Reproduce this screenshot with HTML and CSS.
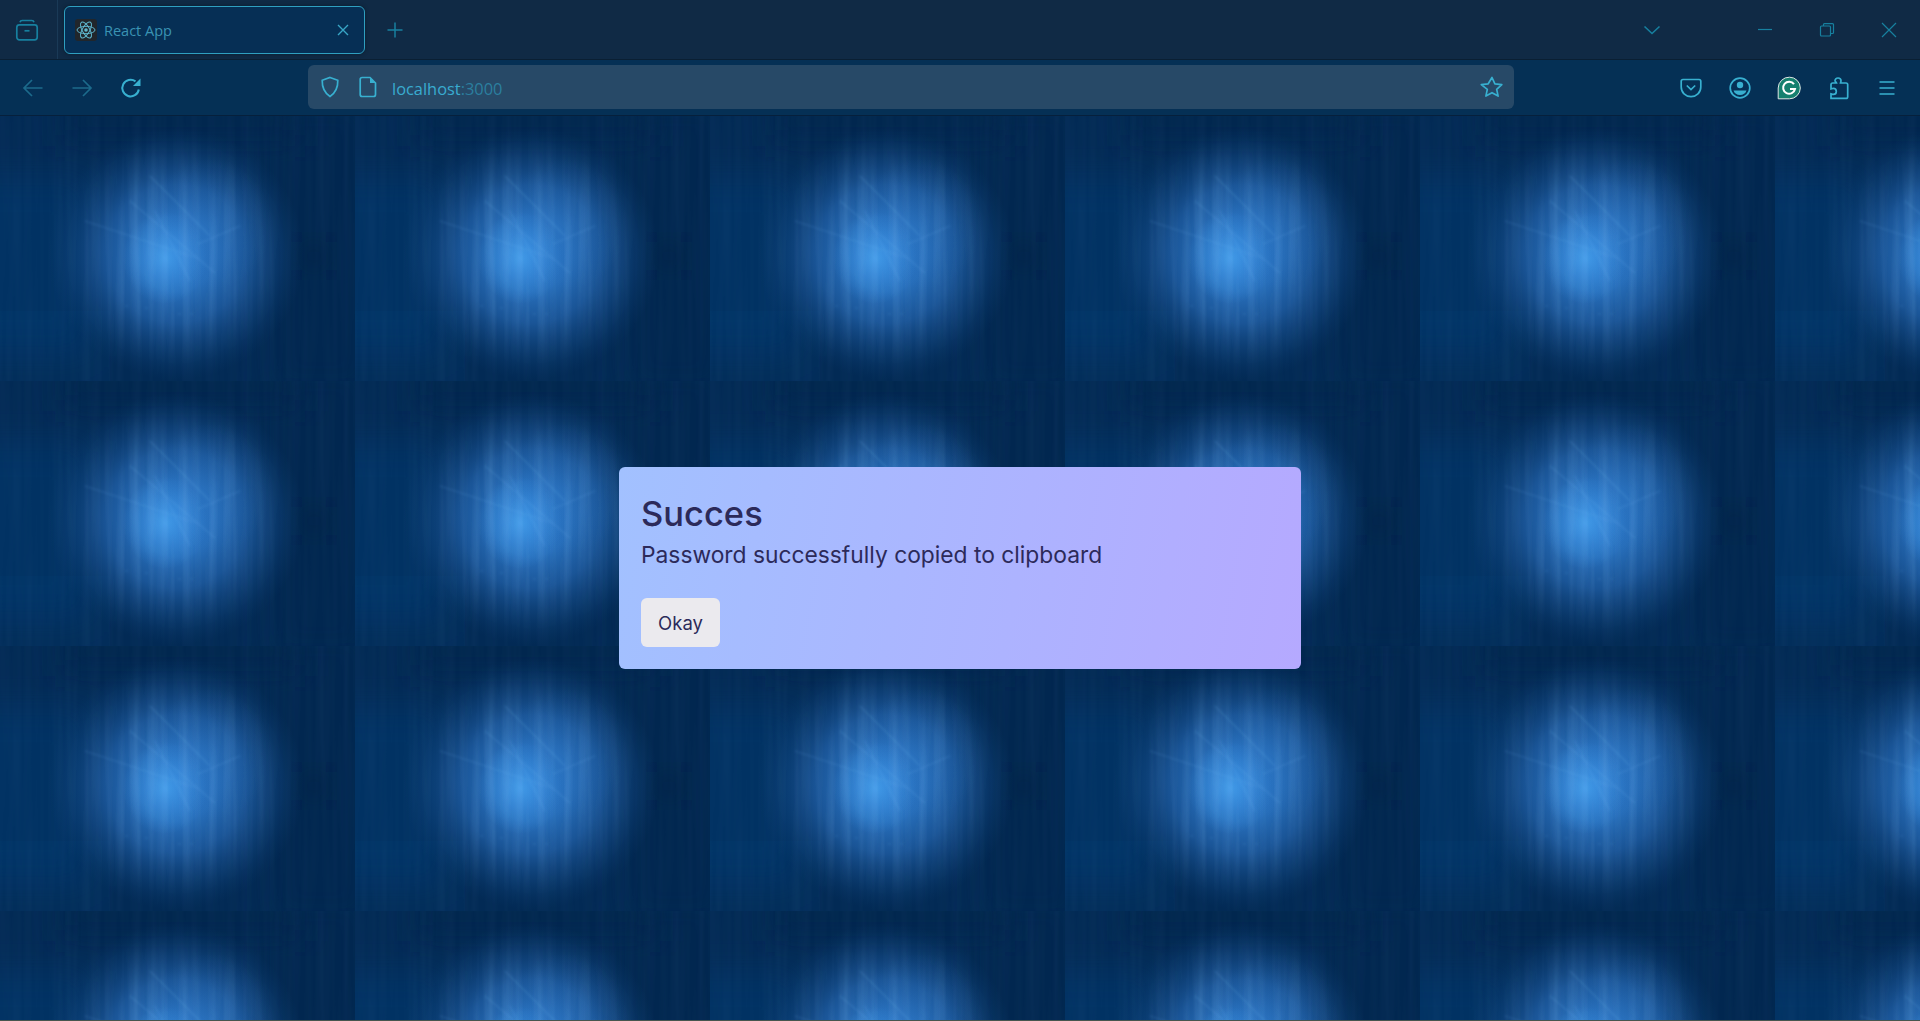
FILE: index.html
```html
<!DOCTYPE html>
<html lang="en">
<head>
<meta charset="utf-8">
<title>React App</title>
<link rel="stylesheet" href="styles.css">
</head>
<body>
<div class="browser">
  <header class="tabbar">
    <div class="tabbar-side">
      <svg class="ico ico-dim" width="24" height="24" viewBox="0 0 24 24"><path d="M5 4.200C5.300 3 6 2.500 7.200 2.500h9.600c1.200 0 1.900.5 2.200 1.700"/><rect x="1.800" y="6.800" width="20.400" height="15" rx="2.600"/><path d="M9.500 12.800h5"/></svg>
    </div>
    <div class="tab">
      <span class="favicon">
        <svg width="20" height="20" viewBox="0 0 20 20" fill="none" stroke="#5fb6cc" stroke-width="1"><ellipse cx="10" cy="10" rx="9" ry="3.700"/><ellipse cx="10" cy="10" rx="9" ry="3.700" transform="rotate(60 10 10)"/><ellipse cx="10" cy="10" rx="9" ry="3.700" transform="rotate(120 10 10)"/><circle cx="10" cy="10" r="1.800" fill="#5fb6cc" stroke="none"/></svg>
      </span>
      <span class="tab-title">React App</span>
      <svg class="ico ico-tabclose" width="14" height="14" viewBox="0 0 14 14"><path d="M2 2l10 10M12 2L2 12"/></svg>
    </div>
    <svg class="ico ico-dim ico-plus" width="18" height="18" viewBox="0 0 18 18"><path d="M9 1.500v15M1.500 9h15"/></svg>
    <div class="tabbar-end">
      <svg class="ico ico-dim ico-chev" width="18" height="12" viewBox="0 0 18 12"><path d="M1.500 2.500L9 9.500l7.500-7"/></svg>
      <div class="winctl">
        <span class="winbtn"><svg class="ico ico-dim" width="16" height="16" viewBox="0 0 16 16"><path d="M1 7.500h14"/></svg></span>
        <span class="winbtn"><svg class="ico ico-dim" width="16" height="16" viewBox="0 0 16 16"><rect x="1.500" y="4" width="10" height="10" rx="1"/><path d="M4.500 4V2.600c0-.6.400-1 1-1H13.500c.6 0 1 .4 1 1V10.500c0 .6-.4 1-1 1H11.500"/></svg></span>
        <span class="winbtn"><svg class="ico ico-dim" width="16" height="16" viewBox="0 0 16 16"><path d="M1 1l14 14M15 1L1 15"/></svg></span>
      </div>
    </div>
  </header>

  <nav class="toolbar">
    <div class="tool-group nav-group">
      <span class="tool"><svg class="ico ico-faint" width="22" height="22" viewBox="0 0 22 22"><path d="M20.500 11H2M10 3l-8 8 8 8"/></svg></span>
      <span class="tool"><svg class="ico ico-faint" width="22" height="22" viewBox="0 0 22 22"><path d="M1.500 11H20M12 3l8 8-8 8"/></svg></span>
      <span class="tool"><svg class="ico ico-bright ico-reload" width="22" height="22" viewBox="0 0 22 22"><path d="M18.800 12.500A8.300 8.300 0 1 1 15.500 4.400"/><path class="solid" d="M20.500 1.500v7.500h-7.500z"/></svg></span>
    </div>
    <div class="urlbar">
      <svg class="ico ico-bright" width="20" height="22" viewBox="0 0 20 22"><path d="M10 1.500l7.800 2.800c.2 7.500-2.200 12.600-7.800 16.200C4.400 16.900 2 11.800 2.200 4.300z"/></svg>
      <svg class="ico ico-bright ico-doc" width="18" height="22" viewBox="0 0 18 22"><path d="M3.200 1.500H11l5.500 5.500v11.500c0 1.100-.9 2-2 2H3.200c-1.100 0-2-.9-2-2v-15c0-1.100.9-2 2-2z"/><path class="solid" d="M11 1.500l5.500 5.500H11z"/></svg>
      <span class="url"><span class="url-host">localhost</span><span class="url-port">:3000</span></span>
      <svg class="ico ico-bright ico-star" width="24" height="24" viewBox="0 0 24 24"><path d="M12 2.500l2.900 6.300 6.900.8-5.100 4.700 1.400 6.800-6.100-3.400-6.100 3.400 1.400-6.800L1.300 9.600l6.900-.8z" stroke-linejoin="round"/></svg>
    </div>
    <div class="tool-group">
      <span class="tool"><svg class="ico ico-bright" width="22" height="22" viewBox="0 0 22 22"><path d="M3 2.500h16c1.100 0 1.800.7 1.800 1.800V10c0 5.500-4.400 9.700-9.800 9.700S1.200 15.500 1.200 10V4.300c0-1.100.7-1.800 1.800-1.800z"/><path d="M6.800 8.500l4.200 4 4.200-4"/></svg></span>
      <span class="tool"><svg class="ico ico-bright" width="22" height="22" viewBox="0 0 22 22"><circle cx="11" cy="11" r="9.800"/><circle class="solid" cx="11" cy="8" r="3.200"/><path class="solid" d="M4.500 13.500h13c-.8 2.800-3.400 4.500-6.500 4.500s-5.700-1.700-6.500-4.500z"/></svg></span>
      <span class="tool"><svg width="24" height="24" viewBox="0 0 24 24"><path d="M12.500 1.200a10.600 10.600 0 0 1 0 21.600H1.200V12A11 11 0 0 1 12.500 1.200z" fill="#15806f" stroke="#dfe8e6" stroke-width="1"/><path d="M17 8.200A6 6 0 1 0 18 13h-5" fill="none" stroke="#fff" stroke-width="2"/></svg></span>
      <span class="tool"><svg class="ico ico-bright" width="22" height="24" viewBox="0 0 22 24"><path d="M11 2c1.800 0 3 1.200 3 2.800 0 .7-.3 1.300-.5 2.200h5.500c1 0 1.700.7 1.700 1.700v12c0 1-.7 1.700-1.700 1.700H4v-4.500c.8.200 1.500.5 2.300.5 1.700 0 3-1.300 3-3s-1.300-3-3-3c-.8 0-1.500.3-2.300.5V8.700C4 7.700 4.700 7 5.700 7h3.800C9.200 6.100 8 5.500 8 4.800 8 3.200 9.200 2 11 2z"/></svg></span>
      <span class="tool"><svg class="ico ico-bright" width="18" height="16" viewBox="0 0 18 16"><path d="M1.500 2h15M1.500 8h15M1.500 14h15"/></svg></span>
    </div>
  </nav>

  <main class="content">
    <svg class="wallpaper" width="100%" height="100%" aria-hidden="true">
      <defs>
        <pattern id="tile" width="355" height="265" patternUnits="userSpaceOnUse">
          <rect width="355" height="265" fill="#022a55"/>
          <rect x="-40" y="60" width="130" height="180" fill="#043f7e" opacity=".35" filter="url(#soft)"/>
          <rect x="265" y="-20" width="110" height="300" fill="#01234a" opacity=".45" filter="url(#soft)"/>
          <rect x="60" y="-20" width="240" height="50" fill="#01244a" opacity=".55" filter="url(#soft)"/>
          <rect x="300" y="125" width="28" height="30" fill="#011c3a" opacity=".5" filter="url(#soft)"/>
          <rect x="0" y="195" width="110" height="70" fill="#043f80" opacity=".12"/>
          <ellipse cx="176" cy="138" rx="128" ry="126" fill="url(#glow)"/>
          <ellipse cx="210" cy="108" rx="62" ry="66" fill="url(#glowSide)"/>
          <ellipse cx="165" cy="142" rx="42" ry="46" fill="url(#core)"/>
          <rect width="355" height="265" filter="url(#streaks)" opacity=".04"/>
          <ellipse cx="176" cy="136" rx="110" ry="112" fill="url(#streakMask)" filter="url(#streaks)" opacity=".16"/>
          <g fill="none" stroke="#6fb6f2" stroke-width="1.200" opacity=".18" filter="url(#line)">
            <path d="M85 105l115 38"/>
            <path d="M130 85l50 42 35 30"/>
            <path d="M155 95l35 70"/>
            <path d="M198 128l42-18"/>
            <path d="M150 60l60 60"/>
            <path d="M125 190h3M145 192h3M178 198h3M190 198h3"/>
          </g>
        </pattern>
        <radialGradient id="glow">
          <stop offset="0" stop-color="#2a78cc"/>
          <stop offset=".3" stop-color="#276eba"/>
          <stop offset=".55" stop-color="#1e5ca2" stop-opacity=".85"/>
          <stop offset=".78" stop-color="#164f8e" stop-opacity=".42"/>
          <stop offset="1" stop-color="#0c3f75" stop-opacity="0"/>
        </radialGradient>
        <radialGradient id="glowSide">
          <stop offset="0" stop-color="#2f78c6" stop-opacity=".3"/>
          <stop offset="1" stop-color="#2f78c6" stop-opacity="0"/>
        </radialGradient>
        <radialGradient id="core">
          <stop offset="0" stop-color="#49a6f2" stop-opacity=".75"/>
          <stop offset="1" stop-color="#3f96e8" stop-opacity="0"/>
        </radialGradient>
        <radialGradient id="streakMask">
          <stop offset="0" stop-color="#fff" stop-opacity="1"/>
          <stop offset=".6" stop-color="#fff" stop-opacity=".8"/>
          <stop offset="1" stop-color="#fff" stop-opacity="0"/>
        </radialGradient>
        <filter id="soft" x="-30%" y="-30%" width="160%" height="160%"><feGaussianBlur stdDeviation="16"/></filter>
        <filter id="line" x="-10%" y="-10%" width="120%" height="120%"><feGaussianBlur stdDeviation="1"/></filter>
        <filter id="streaks" x="0" y="0" width="100%" height="100%">
          <feTurbulence type="fractalNoise" baseFrequency=".12 .005" numOctaves="2" seed="7"/>
          <feColorMatrix values="0 0 0 0 .35  0 0 0 0 .65  0 0 0 0 1  1.800 0 0 0 -.75"/>
          <feComposite in2="SourceAlpha" operator="in"/>
        </filter>
      </defs>
      <rect width="100%" height="100%" fill="url(#tile)"/>
    </svg>
    <section class="dialog">
      <h1 class="dialog-title">Succes</h1>
      <p class="dialog-text">Password successfully copied to clipboard</p>
      <button class="dialog-btn" type="button">Okay</button>
    </section>
  </main>
</div>
</body>
</html>
```

FILE: styles.css
```css
* { box-sizing: border-box; }
html, body { margin: 0; height: 100%; overflow: hidden; }
body { background: #02294f; font-family: "Open Sans", "Noto Sans", sans-serif; }

.browser { display: flex; flex-direction: column; height: 1021px; }

.ico { fill: none; stroke-width: 1.700; display: block; flex: none; }
.ico .solid { stroke: none; }
.ico-dim { stroke: #17809f; }
.ico-faint { stroke: #1c6a8b; }
.ico-bright { stroke: #38b0d0; }
.ico-bright .solid { fill: #38b0d0; }

.tabbar {
  display: flex; align-items: center;
  height: 60px; flex: none;
  background: #102a45;
  border-bottom: 1px solid #0a1f33;
}
.tabbar-side {
  width: 58px; height: 59px;
  display: flex; align-items: center; justify-content: center;
  border-right: 1px solid #1a3a57;
  padding-right: 13px; padding-left: 9px;
}
.tab {
  margin-left: 6px; width: 301px; height: 48px;
  display: flex; align-items: center;
  background: #062f55;
  border: 1px solid #2f9fc0;
  border-radius: 6px;
  padding: 0 14px 0 10px;
  box-shadow: 0 0 4px rgba(0, 0, 0, .35);
}
.favicon {
  width: 22px; height: 22px; flex: none;
  background: #21262b; border-radius: 3px;
  display: flex; align-items: center; justify-content: center;
}
.tab-title { margin-left: 7px; padding-top: 1px; flex: 1; font-size: 14.500px; color: #3a93b3; }
.ico-tabclose { stroke: #38a6c6; stroke-width: 1.400; }
.ico-plus { margin-left: 21px; stroke-width: 1.500; }
.tabbar-end { margin-left: auto; display: flex; align-items: center; height: 100%; }
.ico-chev { margin-right: 73px; stroke-width: 1.600; }
.winctl { display: flex; align-items: center; padding-right: 0; }
.winbtn { width: 62px; display: flex; justify-content: center; }
.winctl .ico { stroke-width: 1.200; }

.toolbar {
  display: flex; align-items: center;
  height: 56px; flex: none;
  padding: 0 9px;
  background: #053055;
  border-bottom: 1px solid #06203c;
}
.tool-group { display: flex; align-items: center; }
.nav-group { margin-left: -1px; }
.tool { width: 49px; display: flex; align-items: center; justify-content: center; }
.ico-reload { stroke-width: 2; }
.urlbar {
  margin: 0 0 1px 153px; width: 1206px; height: 44px;
  display: flex; align-items: center;
  background: #274967;
  border-radius: 6px;
  padding: 0 10px 0 12px;
}
.ico-doc { margin-left: 19px; }
.url { margin-left: 15px; padding-top: 2px; font-size: 16.400px; flex: 1; }
.url-host { color: #39acd0; }
.url-port { color: #2b7f9f; }
.toolbar > .tool-group:last-child { margin-left: auto; }

.content {
  position: relative; flex: 1; min-height: 0;
  display: flex; align-items: center; justify-content: center;
  overflow: hidden;
  border-bottom: 1px solid #46564f;
}
.wallpaper { position: absolute; inset: 0; display: block; }
.dialog {
  position: relative;
  width: 682px; height: 202px;
  padding: 24px 22px 0;
  border-radius: 6px;
  background: linear-gradient(100deg, #a2c1ff 0%, #b5a9ff 100%);
  color: #2c2a5a;
  font-family: Inter, "Noto Sans", sans-serif;
}
.dialog-title { margin: 0; font-size: 34.500px; line-height: 46px; font-weight: 500; }
.dialog-text { margin: 2px 0 27px; font-size: 22.800px; line-height: 32px; font-weight: 400; }
.dialog-btn {
  display: block;
  width: 79px; height: 49px;
  border: 0; border-radius: 6px;
  background: #ebeaee;
  color: #2c2a5a;
  font: 400 18.500px Inter, "Noto Sans", sans-serif;
}
```
